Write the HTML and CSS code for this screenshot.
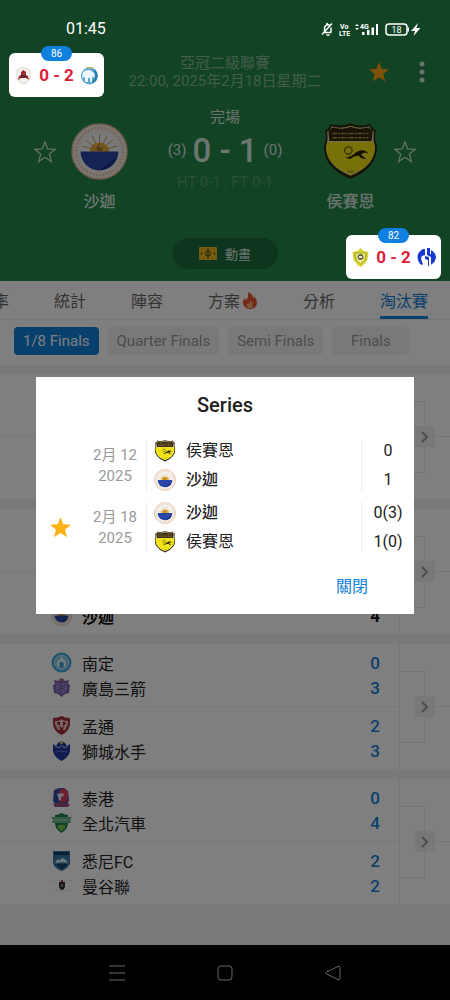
FILE: index.html
```html
<!DOCTYPE html>
<html lang="zh-Hant">
<head>
<meta charset="utf-8">
<meta name="viewport" content="width=device-width, initial-scale=1">
<title>亞冠二級聯賽</title>
<link rel="stylesheet" href="styles.css">
</head>
<body>
<svg class="defs" aria-hidden="true">
  <symbol id="star" viewBox="0 0 24 24"><path d="M12 1l2.900 7.700 8.100.4-6.300 5.200 2.200 8L12 17.800l-6.900 4.500 2.200-8L1 9.100l8.100-.4z"/></symbol>
  <symbol id="sharjah" viewBox="0 0 57 57">
    <circle cx="28.500" cy="28.500" r="27.500" fill="#f4efe6" stroke="#e2b79a" stroke-width="1.500"/>
    <circle cx="28.500" cy="28.500" r="23.500" fill="none" stroke="#dc9c7c" stroke-width="2.500" stroke-dasharray="2 1.500" opacity=".45"/>
    <circle cx="28.500" cy="28.500" r="19.500" fill="#f6f5f5"/>
    <path d="M28.500 28V11M28.500 28L21 12.500M28.500 28L36 12.500M28.500 28L15 17M28.500 28L42 17M28.500 28L11 23M28.500 28L46 23" stroke="#c9a55c" stroke-width="1"/>
    <path d="M18.500 29a10 9.500 0 0 1 20 0z" fill="#e8ab3a"/>
    <path d="M25 25l3-4 1 4 3-1-1 4h-5z" fill="#a87a28"/>
    <path d="M9.500 28.500h38a19 19 0 0 1-38 0z" fill="#2846a8"/>
    <path d="M30 46l15-11a19 19 0 0 1-15 12z" fill="#182f86"/>
  </symbol>
  <symbol id="hussein" viewBox="0 0 54 54">
    <path d="M8 1q9 3 19-.5Q37 4 46 1q1 4 5 6-2 7 1 15 1 20-25 31Q1 42 2 22q3-8 1-15 4-2 5-6z" fill="#2b240d"/>
    <path d="M9 3q9 3 18-.5Q36 6 45 3q1 4 4 5-1 7 1 14 1 18-23 28Q3 40 4 22q2-7 1-14 3-1 4-5z" fill="#e9df9c"/>
    <path d="M5 18h44l1 5q0 17-23 26Q4 40 4 23z" fill="#f0e315"/>
    <path d="M10 4q9 3 17-.5Q35 7 44 4l4 4-1 9H7L6 8z" fill="#35260f"/>
    <path d="M10 10h34M10 14h34" stroke="#b89a4a" stroke-width="1.500" stroke-dasharray="4 1 2 1"/>
    <circle cx="25" cy="26" r="3.500" fill="none" stroke="#3a3214"/>
    <path d="M22 33q6-1 10-5 7-5 12 1-5-2-7 1l5 4q-5 0-7-3-5 0-8 3z" fill="#262009"/>
    <path d="M24 46h6" stroke="#a59a1b" stroke-width="1.500"/>
  </symbol>
</svg>

<div class="screen">
  <header class="header">
    <div class="status">
      <time>01:45</time>
      <svg class="status-icons" viewBox="0 0 102 18" role="img" aria-label="靜音, VoLTE, 4G, 電量 18">
        <g fill="none" stroke="#fff" stroke-width="1.500">
          <path d="M2.500 12.500h8M3.500 12V8.500A3.500 3.500 0 0 1 8.500 5M10 7.500V12M1 14.500L11 3.500M6 3V5M5.500 15h3"/>
          <rect x="65" y="4" width="21" height="11" rx="3"/>
        </g>
        <text x="19" y="8.500" class="tiny">Vo</text><text x="18" y="15.500" class="tiny">LTE</text>
        <path d="M34 6l2-2 2 2zM34 8l2 2 2-2zM41 12h2.500v3H41zM46 10h2.500v5H46zM50.500 7.500H53V15h-2.500zM55 4h2v11h-2z" fill="#fff"/>
        <text x="39" y="9" class="tiny">4G</text>
        <text x="75.500" y="13" class="battery">18</text>
        <path d="M86.500 7.500H88v4h-1.500zM97 3l-7 8h4l-1.500 5 7-8h-4z" fill="#fff"/>
      </svg>
    </div>
    <div class="title-row">
      <h1 class="title">亞冠二級聯賽<br>22:00, 2025年2月18日星期二</h1>
      <button class="icon-btn gold" aria-label="收藏"><svg width="22" height="22" fill="currentColor"><use href="#star"/></svg></button>
      <button class="icon-btn more" aria-label="更多"><svg width="6" height="22" fill="currentColor"><circle cx="3" cy="3" r="2.500"/><circle cx="3" cy="11" r="2.500"/><circle cx="3" cy="19" r="2.500"/></svg></button>
    </div>
    <div class="fixture">
      <button class="icon-btn outline" aria-label="收藏沙迦"><svg width="22" height="22" fill="none" stroke="currentColor" stroke-width="1.400"><use href="#star"/></svg></button>
      <div class="club"><svg width="57" height="57"><use href="#sharjah"/></svg><span>沙迦</span></div>
      <div class="result">
        <span class="state">完場</span>
        <div class="score"><small>(3)</small><strong>0 - 1</strong><small>(0)</small></div>
        <span class="periods">HT 0-1 , FT 0-1</span>
      </div>
      <div class="club"><svg width="57" height="57"><use href="#hussein"/></svg><span>侯賽恩</span></div>
      <button class="icon-btn outline" aria-label="收藏侯賽恩"><svg width="22" height="22" fill="none" stroke="currentColor" stroke-width="1.400"><use href="#star"/></svg></button>
    </div>
    <button class="animation">
      <svg width="18" height="13" viewBox="0 0 18 13"><rect width="18" height="13" rx="1" fill="#f0b420"/><g fill="none" stroke="#3c4a14"><circle cx="9" cy="6.500" r="2.500"/><path d="M9 1v11M2 5q2 1.500 0 3M16 5q-2 1.500 0 3"/></g></svg>
      動畫
    </button>
  </header>

  <nav class="tabs">
    <a href="#odds">率</a>
    <a href="#stats">統計</a>
    <a href="#lineup">陣容</a>
    <a href="#tips">方案<svg width="16" height="17" viewBox="0 0 16 17"><path d="M6 0q6 3 5 7 1-1 1-3 6 8 0 12-4 2-8 0-6-5-1-10 0 2 1 2Q7 5 6 0z" fill="#e9502f"/><path d="M8 8q4 4 2 8H6q-3-3 0-5l1 1q1-1 1-4z" fill="#f9b56d"/></svg></a>
    <a href="#analysis">分析</a>
    <a href="#knockout" class="current">淘汰賽</a>
  </nav>

  <div class="rounds">
    <button class="round active">1/8 Finals</button>
    <button class="round">Quarter Finals</button>
    <button class="round">Semi Finals</button>
    <button class="round">Finals</button>
  </div>

  <main class="bracket">
    <section class="pair">
      <div class="match"></div><div class="match"></div>
      <div class="link"><i></i><button aria-label="詳情"><svg width="8" height="12" viewBox="0 0 8 12"><path d="M1 1l5 5-5 5"/></svg></button><b></b></div>
    </section>
    <section class="pair">
      <div class="match"></div>
      <div class="match own">
        <div class="team"><svg width="21" height="21"><use href="#sharjah"/></svg><span>沙迦</span><strong>4</strong></div>
      </div>
      <div class="link"><i></i><button aria-label="詳情"><svg width="8" height="12" viewBox="0 0 8 12"><path d="M1 1l5 5-5 5"/></svg></button><b></b></div>
    </section>
    <section class="pair">
      <div class="match">
        <div class="team"><svg width="21" height="21" viewBox="0 0 21 21"><circle cx="10.500" cy="10.500" r="10" fill="#3fa9dc"/><circle cx="10.500" cy="10.500" r="7" fill="#79c4e6" stroke="#e5f5fb"/><path d="M6 14V9l3-2 1.500-3L12 7l3 2v5l-2 1v-4l-2.500-1L8 11v4z" fill="#e8f6fc"/><path d="M9 10h3v5H9z" fill="#3b9dcb"/></svg><span>南定</span><strong>0</strong></div>
        <div class="team"><svg width="21" height="21" viewBox="0 0 21 21"><path d="M3 3l4 1 3.500-3L14 4l4-1-1 4 2 1-1 8-4 1-3.500 3L7 17l-4-1-1-8 2-1z" fill="#7d5fae"/><path d="M5 6h11v8l-5 3-6-3z" fill="#9b86c4"/><path d="M6 7l9 7M15 7l-9 7M10 5v11" stroke="#6a4d9c"/><path d="M8 2h5v2H8z" fill="#bd6f88"/></svg><span>廣島三箭</span><strong>3</strong></div>
      </div>
      <div class="match">
        <div class="team"><svg width="21" height="21" viewBox="0 0 21 21"><path d="M2 3q5 0 8.500-2Q14 3 19 3v5q0 8-8.500 12Q2 16 2 8z" fill="#a82f38"/><path d="M4 6q5 0 6.500-2Q12 6 17 6v3l-3 6h-2l1-5-2.500 3L8 10l1 5H7L4 9z" fill="#e8c9c6"/><path d="M6 7h3v3H7zM12 7h3l-1 3h-2zM9 16h3l-2 3z" fill="#9a2431"/></svg><span>孟通</span><strong>2</strong></div>
        <div class="team"><svg width="21" height="21" viewBox="0 0 21 21"><path d="M2 4l3 2 2-3 3.500-2L14 3l2 3 3-2v7q-1 6-8.500 10Q3 17 2 11z" fill="#25369e"/><path d="M4 6l4 2 2.500-3L13 8l4-2" stroke="#b9c3e4" fill="none"/><path d="M5 12q5-2 11 0" stroke="#5d74ca" fill="none"/><path d="M9 1h3v3H9z" fill="#d4b765"/></svg><span>獅城水手</span><strong>3</strong></div>
      </div>
      <div class="link"><i></i><button aria-label="詳情"><svg width="8" height="12" viewBox="0 0 8 12"><path d="M1 1l5 5-5 5"/></svg></button><b></b></div>
    </section>
    <section class="pair">
      <div class="match">
        <div class="team"><svg width="21" height="21" viewBox="0 0 21 21"><path d="M3 3l5-2h5l4 3 1 9-2 5H5l-3-4z" fill="#334ca2"/><path d="M9 2q9-1 8 6l-1 7H9l2-5-4-1z" fill="#dc3c58"/><path d="M6 7l6-1 1 3-3 1v4l-2-1z" fill="#ece9f2"/><path d="M2 17q8-3 17 0l-2 3H4z" fill="#9d4a7d"/></svg><span>泰港</span><strong>0</strong></div>
        <div class="team"><svg width="21" height="21" viewBox="0 0 21 21"><path d="M4 3q3 0 6.500-2Q14 3 17 3v8q0 6-6.500 10Q4 17 4 11z" fill="#1d8350"/><path d="M0 5h21l-2 3 1 3H1l1-3z" fill="#62b389"/><path d="M4 8h13" stroke="#d5eee0" stroke-dasharray="2 1"/><path d="M7 13h7v3l-4 3-3-3z" fill="#7ac645"/></svg><span>全北汽車</span><strong>4</strong></div>
      </div>
      <div class="match">
        <div class="team"><svg width="21" height="21" viewBox="0 0 21 21"><path d="M2 1h17v12q-1 5-8.500 8Q3 18 2 13z" fill="#3478aa"/><path d="M3 2h15v3H3z" fill="#173f66"/><path d="M4 13q2-5 5-3l2-2q3 0 6 5l-6-1z" fill="#e3f1f8"/><path d="M4 14h13l-6 6z" fill="#18466e"/></svg><span>悉尼FC</span><strong>2</strong></div>
        <div class="team"><svg width="21" height="21" viewBox="0 0 21 21"><path d="M0 5h21v1H0zM0 15h21v1H0z" fill="#eee"/><path d="M8 7h6v4q0 3-3 4-3-1-3-4z" fill="#333"/><path d="M10 5h2v2h-2z" fill="#b24a4a"/><path d="M10 9h2v3h-2z" fill="#8c7f74"/></svg><span>曼谷聯</span><strong>2</strong></div>
      </div>
      <div class="link"><i></i><button aria-label="詳情"><svg width="8" height="12" viewBox="0 0 8 12"><path d="M1 1l5 5-5 5"/></svg></button><b></b></div>
    </section>
  </main>

  <footer class="sysnav">
    <button aria-label="最近"><svg width="18" height="18"><path d="M1 2h16M1 9h16M1 16h16"/></svg></button>
    <button aria-label="主頁"><svg width="18" height="18"><rect x="2" y="2" width="14" height="14" rx="3"/></svg></button>
    <button aria-label="返回"><svg width="18" height="18"><path d="M14 2.500q2-1 2 1v11q0 2-2 1L2.500 10q-1.500-1 0-2z"/></svg></button>
  </footer>

  <div class="scrim">
    <div class="dialog" role="dialog" aria-modal="true" aria-labelledby="series">
      <h2 id="series">Series</h2>
      <div class="legs">
        <div class="leg">
          <span class="mark"></span>
          <time>2月 12<br>2025</time>
          <div class="sides">
            <div><svg width="22" height="22"><use href="#hussein"/></svg>侯賽恩</div>
            <div class="winner"><svg width="22" height="22"><use href="#sharjah"/></svg>沙迦</div>
          </div>
          <div class="goals"><span>0</span><span>1</span></div>
        </div>
        <div class="leg">
          <span class="mark"><svg width="23" height="23" fill="#fdb217"><use href="#star"/></svg></span>
          <time>2月 18<br>2025</time>
          <div class="sides">
            <div class="winner"><svg width="22" height="22"><use href="#sharjah"/></svg>沙迦</div>
            <div><svg width="22" height="22"><use href="#hussein"/></svg>侯賽恩</div>
          </div>
          <div class="goals"><span>0(3)</span><span>1(0)</span></div>
        </div>
      </div>
      <button class="close">關閉</button>
    </div>
  </div>

  <aside class="float float-left">
    <span class="minute">86</span>
    <svg width="19" height="19" viewBox="0 0 19 19"><path d="M9 1l7 3v8q-2 5-6.500 6Q4 17 3 12V4z" fill="#f4f2ed" stroke="#dedad0"/><path d="M5 10l2-1V6l2.500-2L12 6v3l2 1 1 4-3-2H7l-3 2z" fill="#a12b32"/><path d="M7 9h5v3H7z" fill="#5c2a26"/></svg>
    <strong>0 - 2</strong>
    <svg width="19" height="19" viewBox="0 0 19 19"><circle cx="9.500" cy="10" r="8.500" fill="#5ba7d3"/><path d="M3 6q6-4 10 0 3 3 1 6l-2-2v6h-2v-4H8v4H5v-5l-3 1z" fill="#edf6fa"/><path d="M14 4q4 4 1 10l-2 2" stroke="#2878ad" stroke-width="2" fill="none"/><path d="M6 1h7l-2 2H8z" fill="#b8ad81"/></svg>
  </aside>
  <aside class="float float-right">
    <span class="minute">82</span>
    <svg width="19" height="19" viewBox="0 0 19 19"><path d="M9.500 0l3 3 5 1-1 8-4 5-3 2-3-2-4-5-1-8 5-1z" fill="#d7d52c"/><path d="M4 5h11l-1 7-4.500 4L5 12z" fill="#f2ee83" stroke="#9ba235"/><circle cx="9.500" cy="9" r="3" fill="#65683d"/><path d="M8 8h3v2H8z" fill="#ece7d0"/></svg>
    <strong>0 - 2</strong>
    <svg width="19" height="19" viewBox="0 0 19 19"><g fill="#1838d4"><path d="M6 1Q-1 5 1 12q1 4 4 5l1-1q-3-5-1-8l3-1v4l3 1v7H8q4 0 4-2V9l-4-1V1zM10 0h3v6l4 1v2q0 5-3 8V9l-4-2zM14 2q5 3 5 8-1 4-4 6 2-3 2-8l-3-2z"/></g></svg>
  </aside>
</div>
</body>
</html>
```

FILE: styles.css
```css
* { box-sizing: border-box; }

body {
  margin: 0;
  background: #000;
  font-family: Roboto, "Noto Sans CJK TC", sans-serif;
  font-size: 16px;
  color: #212121;
}

button {
  padding: 0;
  border: 0;
  background: none;
  font: inherit;
  color: inherit;
}

svg { display: block; flex: none; }
h1, h2 { margin: 0; }
.defs { position: absolute; width: 0; height: 0; }

.screen {
  position: relative;
  display: flex;
  flex-direction: column;
  min-height: 100vh;
  overflow: hidden;
  background: #f2f2f2;
}

/* Header */
.header {
  display: flex;
  flex-direction: column;
  padding-bottom: 12px;
  background: #248648;
  color: #fff;
}

.status {
  position: relative;
  z-index: 3;
  display: flex;
  justify-content: space-between;
  height: 54px;
  padding: 19px 27px 0 66px;
  line-height: 20px;
}
.status-icons { width: 102px; height: 20px; }
.tiny { font-size: 7px; font-weight: 700; fill: #fff; }
.battery { font-size: 9px; fill: #fff; text-anchor: middle; }

.title-row {
  display: grid;
  grid-template-columns: 1fr auto 1fr;
  align-items: center;
  height: 36px;
}
.title {
  grid-column: 2;
  grid-row: 1;
  font-size: 15px;
  font-weight: 400;
  line-height: 18px;
  text-align: center;
  color: #87b998;
}
.icon-btn { display: flex; }
.gold { grid-column: 3; grid-row: 1; justify-self: end; margin-right: 60px; color: #ffa011; }
.more { grid-column: 3; grid-row: 1; justify-self: end; margin-right: 25px; color: #d3e5d9; }

.fixture {
  display: flex;
  align-items: flex-start;
  gap: 15px;
  margin-top: 17px;
  padding: 0 34px;
}
.outline { margin-top: 34px; color: #cfe3d6; }
.club {
  display: flex;
  flex-direction: column;
  align-items: center;
  gap: 10px;
  width: 57px;
  padding-top: 16px;
  font-weight: 500;
  line-height: 24px;
  color: #dbeae0;
}
.club span { white-space: nowrap; }
.result { flex: 1; display: flex; flex-direction: column; align-items: center; white-space: nowrap; }
.state { font-size: 15px; line-height: 20px; color: #dbeae0; }
.score { display: flex; align-items: center; gap: 6px; height: 46px; color: #dbeae0; }
.score small { font-size: 15px; }
.score strong { font-size: 33px; font-weight: 500; }
.periods { font-size: 15px; line-height: 18px; color: #559f6e; }

.animation {
  align-self: center;
  display: flex;
  align-items: center;
  justify-content: center;
  gap: 8px;
  width: 105px;
  height: 31px;
  margin-top: 24px;
  border-radius: 16px;
  background: #1d6b3a;
  font-size: 13px;
  color: #dbeae0;
}

/* Tabs */
.tabs {
  display: flex;
  justify-content: flex-end;
  height: 39px;
  padding-right: 22px;
  gap: 45px;
  border-bottom: 1px solid #ececec;
  background: #fff;
}
.tabs a {
  flex: none;
  display: flex;
  align-items: center;
  gap: 2px;
  padding-top: 3px;
  border-bottom: 3px solid transparent;
  color: #666;
  text-decoration: none;
}
.tabs .current { border-color: #1080d8; color: #1080d8; }

.rounds {
  display: flex;
  gap: 9px;
  padding: 7px 14px 10px;
  background: #fff;
}
.round {
  min-width: 77px;
  height: 28px;
  padding: 0 9px;
  border-radius: 4px;
  background: #f2f2f2;
  font-size: 15px;
  color: #999;
}
.round.active { background: #0f80da; color: #fff; }

/* Bracket */
.bracket {
  flex: 1;
  display: flex;
  flex-direction: column;
  gap: 10px;
  padding: 9px 0 41px;
}
.pair {
  display: grid;
  grid-template-columns: 1fr 50px;
  grid-template-rows: 62px 63px;
  background: #fff;
}
.match {
  grid-column: 1;
  display: flex;
  flex-direction: column;
  justify-content: flex-end;
  padding: 6px 19px 6px 51px;
  border-right: 1px solid #ededed;
}
.match + .match { border-top: 1px solid #f0f0f0; }
.team { display: flex; align-items: center; height: 25px; gap: 10px; }
.team span { flex: 1; }
.team strong { font-size: 17px; font-weight: 500; color: #1080d8; }
.own .team, .own strong { font-weight: 700; color: #111; }

.link {
  grid-column: 2;
  grid-row: 1 / 3;
  display: grid;
  grid-template-columns: 15px 20px 15px;
  align-items: center;
}
.link i {
  grid-column: 1 / 3;
  grid-row: 1;
  width: 25px;
  height: 72px;
  border: 1px solid #ebebeb;
  border-left: 0;
}
.link button {
  grid-column: 2;
  grid-row: 1;
  display: grid;
  place-items: center;
  height: 21px;
  background: #f0f0f0;
  z-index: 1;
}
.link path { fill: none; stroke: #999; stroke-width: 2; }
.link b { grid-column: 3; grid-row: 1; height: 1px; background: #e6e6e6; }

/* System navigation */
.sysnav {
  position: relative;
  z-index: 3;
  display: flex;
  height: 55px;
  padding: 0 63px;
  background: #000;
}
.sysnav button { flex: 1; display: grid; place-items: center; }
.sysnav svg { fill: none; stroke: #666; stroke-width: 1; }

/* Series dialog */
.scrim {
  position: absolute;
  inset: 0;
  z-index: 2;
  display: flex;
  align-items: center;
  padding: 45px 36px 54px;
  background: rgba(0, 0, 0, .5);
}
.dialog {
  flex: 1;
  display: flex;
  flex-direction: column;
  padding: 16px 0 15px;
  background: #fff;
}
.dialog h2 {
  font-size: 20px;
  font-weight: 500;
  line-height: 24px;
  text-align: center;
}
.legs { display: grid; gap: 11px; margin: 23px 0 22px; }
.leg { display: grid; grid-template-columns: 48px 62px 1fr 53px; }
.mark { display: grid; place-items: center; }
.leg time {
  align-self: center;
  font-size: 15px;
  line-height: 21px;
  text-align: center;
  color: #999;
}
.sides, .goals {
  display: grid;
  gap: 7px;
  border-left: 1px solid #ececec;
  line-height: 22px;
}
.sides div { display: flex; align-items: center; gap: 10px; height: 22px; padding-left: 7px; }
.winner { font-weight: 500; }
.goals { text-align: center; }
.close { align-self: flex-end; margin-right: 46px; line-height: 24px; color: #1080d8; }

/* Floating live scores */
.float {
  position: absolute;
  z-index: 3;
  display: flex;
  align-items: center;
  justify-content: center;
  gap: 6px;
  width: 95px;
  height: 44px;
  border-radius: 6px;
  background: #fff;
  color: #db2038;
}
.float strong { font-size: 17px; font-weight: 700; }
.float-left { top: 53px; left: 9px; }
.float-right { top: 235px; right: 9px; }
.minute {
  position: absolute;
  top: -7px;
  left: 32px;
  width: 31px;
  border-radius: 8px;
  background: #0f80e0;
  font-size: 10px;
  line-height: 15px;
  text-align: center;
  color: #fff;
}
```
